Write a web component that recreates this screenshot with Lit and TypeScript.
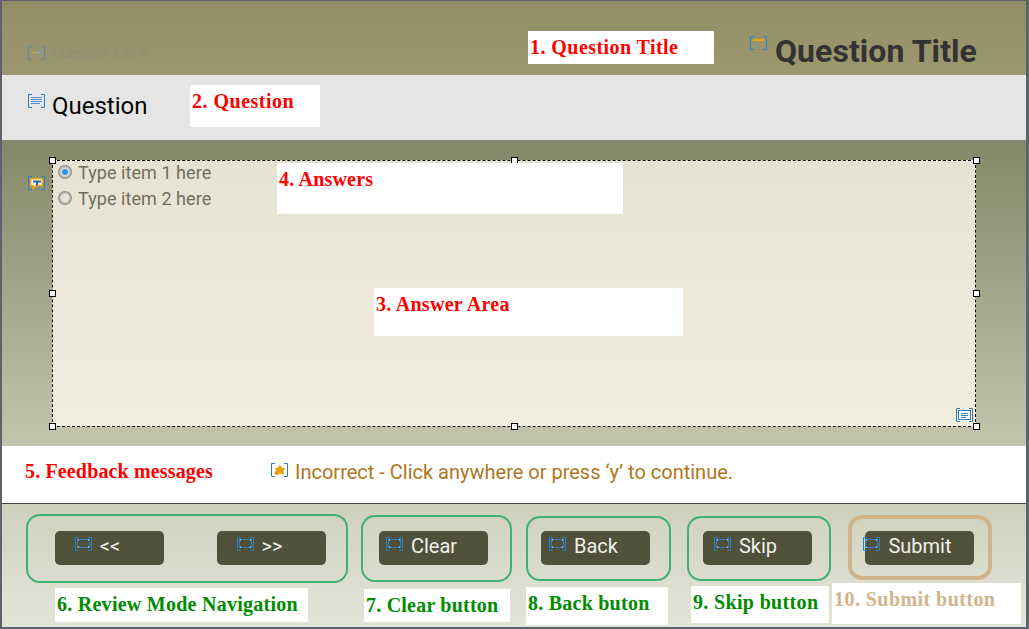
import { LitElement, html, css, svg } from "lit";
import { customElement } from "lit/decorators.js";

const bracket = svg`<path d="M4 .5H.5V13.5H4M13 .5H16.5V13.5H13" fill="none" stroke="#2f7fc4" stroke-width="1"/>`;
const icons: Record<string, unknown> = {
  title: svg`${bracket}<rect x="3" y="3" width="11" height="2" fill="#e3a90e"/>`,
  counter: svg`<g opacity=".5">${bracket}<rect x="3" y="6" width="8" height="1" fill="#e3c050"/><rect x="10" y="5" width="4" height="3" fill="#6fa8d8"/></g>`,
  text: svg`${bracket}<path d="M3 3.5H14M3 5.5H14M3 7.5H14M3 9.5H12" stroke="#2f7fc4" stroke-width="1" opacity=".8"/>`,
  box: svg`${bracket}<rect x="2.5" y="2.5" width="12" height="9" fill="#fff" stroke="#2f7fc4"/><path d="M5 5.5H12M5 7.5H12M5 9.5H10" stroke="#2f7fc4"/>`,
  answer: svg`${bracket}<path d="M2.7 2.7H14.3V9.5H8L5 12.5V9.5H2.7Z" fill="#fff" stroke="#e8a80e" stroke-width="1.4"/><path d="M5 4.5H13V6.5H10V9H8V6.5H5Z" fill="#2b62a8"/>`,
  star: svg`${bracket}<path d="M9 1.5L10.5 4.5L14.5 5.5L12.5 8L13 12L9.5 10.5L6 12.5L3 10.5L5 7.5L4 5.5L7 4.5Z" fill="#e5a50f"/>`,
  btn: svg`${bracket}<rect x="2.5" y="2.5" width="12" height="8" fill="none" stroke="#2f7fc4"/><path d="M3 3h1M13 3h1M3 10h1M13 10h1" stroke="#eee"/>`,
};
const icon = (name: string, cls = "") =>
  html`<svg class="icon ${cls}" width="17" height="14" viewBox="0 0 17 14">${icons[name]}</svg>`;

@customElement("app-root")
export class AppRoot extends LitElement {
  static styles = css`
    :host { display: block; width: 1029px; height: 629px; overflow: hidden; font-family: Roboto, "Liberation Sans", sans-serif; }
    * { box-sizing: border-box; }
    .frame { position: relative; width: 1029px; height: 629px; border: solid #5f626c; border-width: 1px 3px 2px 2px; display: flex; flex-direction: column; }
    .icon { flex: none; display: block; }
    .head { height: 74px; flex: none; display: flex; justify-content: space-between; background: linear-gradient(#918e65, #9c9971); padding: 0 49px 0 26px; }
    .counter { display: flex; gap: 7px; align-items: flex-start; padding-top: 44px; font-size: 14px; line-height: 16px; color: #8f8f74; }
    .counter .icon { margin-top: 1px; }
    .title { display: flex; align-items: flex-start; gap: 8px; padding-top: 32px; font-size: 32px; font-weight: 700; line-height: 37px; letter-spacing: .08px; color: #333333; }
    .title .icon { margin-top: 3px; }
    .question { height: 65px; flex: none; background: #e5e5e5; display: flex; gap: 7px; padding: 17px 0 0 26px; font-size: 24px; line-height: 28px; color: #050505; }
    .question .icon { margin-top: 2px; }
    .stage { height: 306px; flex: none; display: flex; background: linear-gradient(#85876a, #c3c5ad); padding: 20px 0 0 26px; }
    .stage > .icon { margin-top: 16px; }
    .area { position: relative; margin-left: 7px; width: 924px; height: 267px; border: 1px dashed #000; background: linear-gradient(#e6e3d3, #f2eee0); padding: 0 0 0 5px; display: flex; flex-direction: column; gap: 4px; }
    .opt { display: flex; align-items: center; gap: 6px; height: 22px; font-size: 18px; letter-spacing: .06px; color: #6f705c; }
    .radio { width: 14px; height: 14px; border-radius: 50%; background: radial-gradient(circle, #e8e6d8 34%, #8f8f88 68%, #c4c4b8 100%); }
    .radio.on { background: radial-gradient(circle, #2a8ee0 24%, #dfe3e6 36%, #8f8f88 68%, #c4c4b8 100%); }
    .h { position: absolute; width: 7px; height: 7px; background: #fff; border: 1px solid #000; }
    .area-icon { position: absolute; right: 2px; bottom: 4px; }
    .feedback { height: 58px; flex: none; background: #fff; border-bottom: 1px solid #444; display: flex; gap: 7px; padding: 15px 0 0 269px; font-size: 20px; line-height: 23px; color: #b0761c; }
    .feedback .icon { margin-top: 2px; }
    .nav { flex: 1; display: flex; padding: 10px 0 0 24px; background: linear-gradient(#cfd1bd, #e4e5da); align-items: flex-start; }
    .group { border: 2px solid #3cb371; border-radius: 14px; display: flex; align-items: flex-start; flex: none; }
    .g1 { width: 322px; height: 69px; justify-content: space-between; padding: 15px 20px 0 27px; margin-right: 13px; }
    .g2 { width: 151px; height: 67px; margin: 1px 14px 0 0; padding: 14px 0 0 16px; }
    .g3 { width: 145px; height: 65px; margin: 2px 16px 0 0; padding: 13px 0 0 13px; }
    .g4 { width: 144px; height: 65px; margin: 2px 17px 0 0; padding: 13px 0 0 14px; }
    .g5 { width: 144px; height: 65px; margin: 1px 0 0 0; border: 4px solid #d2b48c; padding: 12px 0 0 13px; }
    .btn { width: 109px; height: 34px; border-radius: 5px; background: #4f513a; color: #f0f0ea; font-size: 20px; line-height: 30px; display: flex; justify-content: center; flex: none; padding-left: 1px; }
    .label { position: relative; }
    .label .icon { position: absolute; right: 100%; top: 6px; margin-right: 8px; }
    .tag { position: absolute; background: #fff; font-family: "Liberation Serif", serif; font-weight: 700; font-size: 20px; line-height: 22px; padding: 0 2px; white-space: nowrap; }
    .red { color: #ff0000; }
    .green { color: #008c00; }
    .tan { color: #d2b48c; }
  `;

  private tag(t: string, cls: string, x: number, y: number, w: number, h: number, pad: number, ls: number) {
    return html`<div class="tag ${cls}" style="left:${x}px;top:${y}px;width:${w}px;height:${h}px;padding-top:${pad}px;letter-spacing:${ls}px">${t}</div>`;
  }

  private btn(t: string) {
    return html`<div class="btn"><span class="label">${icon("btn")}${t}</span></div>`;
  }

  render() {
    const handles = [[-4, -4], [458, -4], [920, -4], [-4, 129], [920, 129], [-4, 262], [458, 262], [920, 262]];
    return html`<div class="frame">
      <div class="head">
        <div class="counter">${icon("counter")}<span>Question X of Y</span></div>
        <div class="title">${icon("title")}<span>Question Title</span></div>
      </div>
      <div class="question">${icon("text")}<span>Question</span></div>
      <div class="stage">
        ${icon("answer")}
        <div class="area">
          <div class="opt"><span class="radio on"></span>Type item 1 here</div>
          <div class="opt"><span class="radio"></span>Type item 2 here</div>
          ${handles.map(([x, y]) => html`<span class="h" style="left:${x}px;top:${y}px"></span>`)}
          ${icon("box", "area-icon")}
        </div>
      </div>
      <div class="feedback">${icon("star")}<span>Incorrect - Click anywhere or press ‘y’ to continue.</span></div>
      <div class="nav">
        <div class="group g1">${this.btn("<<")}${this.btn(">>")}</div>
        <div class="group g2">${this.btn("Clear")}</div>
        <div class="group g3">${this.btn("Back")}</div>
        <div class="group g4">${this.btn("Skip")}</div>
        <div class="group g5">${this.btn("Submit")}</div>
      </div>
      ${this.tag("1. Question Title", "red", 526, 30, 186, 33, 5, 0.44)}
      ${this.tag("2. Question", "red", 188, 84, 130, 42, 5, 0.5)}
      ${this.tag("4. Answers", "red", 275, 162, 346, 51, 5, 0.2)}
      ${this.tag("3. Answer Area", "red", 372, 287, 309, 48, 5, 0.28)}
      ${this.tag("5. Feedback messages", "red", 21, 459, 200, 36, 0, 0.15)}
      ${this.tag("6. Review Mode Navigation", "green", 53, 587, 253, 34, 5, 0.26)}
      ${this.tag("7. Clear button", "green", 362, 588, 146, 33, 5, 0.22)}
      ${this.tag("8. Back buton", "green", 524, 586, 142, 38, 5, 0.24)}
      ${this.tag("9. Skip button", "green", 689, 585, 138, 37, 5, 0.34)}
      ${this.tag("10. Submit button", "tan", 830, 582, 189, 41, 5, 0.44)}
    </div>`;
  }
}
